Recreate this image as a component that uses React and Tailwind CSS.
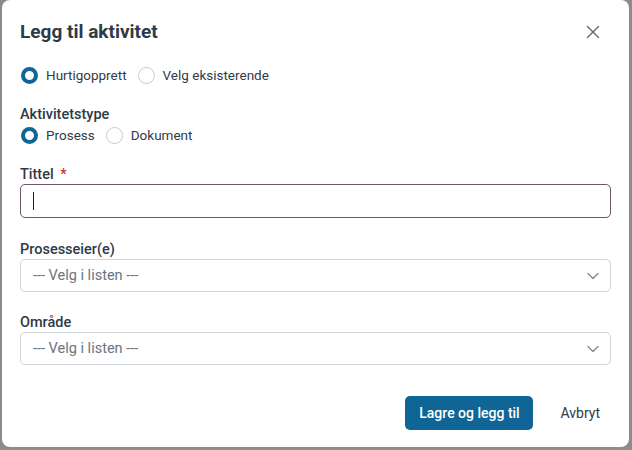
import React from "react";

function Radio({ checked, label }) {
  return (
    <label className="flex items-center gap-[8px] cursor-pointer">
      <span
        className={
          checked
            ? "w-[17px] h-[17px] rounded-full border-[4px] border-[#0f6596] bg-white box-border"
            : "w-[17px] h-[17px] rounded-full border border-[#c4cad3] bg-white box-border"
        }
      />
      <span className="text-[13.5px] leading-[18px] text-[#333b47]">{label}</span>
    </label>
  );
}

function Chevron() {
  return (
    <svg width="14" height="14" viewBox="0 0 14 14" fill="none">
      <path d="M2 4.5 L7 9.5 L12 4.5" stroke="#7f8a99" strokeWidth="1.4" strokeLinecap="round" strokeLinejoin="round" />
    </svg>
  );
}

function Select() {
  return (
    <div className="h-[33px] w-full rounded-[5px] border border-[#cfd5dd] flex items-center justify-between pl-[12px] pr-[10px] bg-white">
      <span className="text-[14.5px] text-[#6b7480]">--- Velg i listen ---</span>
      <Chevron />
    </div>
  );
}

export default function App() {
  return (
    <div
      className="w-[632px] h-[450px] bg-[#8c8c8c] pl-[2px] overflow-hidden"
      style={{ fontFamily: 'Roboto, "Noto Sans", sans-serif' }}
    >
      <div className="w-[627px] h-[447px] bg-white rounded-[8px] px-[18px] pt-[20px] flex flex-col">
        <div className="flex items-center justify-between h-[24px]">
          <h1 className="text-[19px] font-bold text-[#2f3a48] leading-[24px]">Legg til aktivitet</h1>
          <svg width="14" height="14" viewBox="0 0 14 14" className="mr-[11px]">
            <path d="M1.5 1.5 L12.5 12.5 M12.5 1.5 L1.5 12.5" stroke="#5d6877" strokeWidth="1.4" strokeLinecap="round" />
          </svg>
        </div>

        <div className="flex items-center gap-[11px] mt-[22px] h-[18px] pl-[1px]">
          <Radio checked label="Hurtigopprett" />
          <Radio label="Velg eksisterende" />
        </div>

        <div className="mt-[22px] text-[14.5px] font-medium leading-[18px] text-[#2f3a48]">Aktivitetstype</div>
        <div className="flex items-center gap-[11px] mt-[2px] h-[18px] pl-[1px]">
          <Radio checked label="Prosess" />
          <Radio label="Dokument" />
        </div>

        <div className="mt-[22px] text-[14.5px] font-medium leading-[18px] text-[#2f3a48]">
          Tittel <span className="text-[#d32f2f] ml-[3px]">*</span>
        </div>
        <div className="h-[34px] w-full rounded-[5px] border border-[#6e5668] flex items-center pl-[12px]">
          <span className="w-[1px] h-[18px] bg-[#222]" />
        </div>

        <div className="mt-[23px] text-[14.5px] font-medium leading-[18px] text-[#2f3a48]">Prosesseier(e)</div>
        <Select />

        <div className="mt-[22px] text-[14.5px] font-medium leading-[18px] text-[#2f3a48]">Område</div>
        <Select />

        <div className="flex justify-end items-center mt-[31px] gap-[16px]">
          <button className="h-[34px] w-[128px] rounded-[5px] bg-[#0f6596] text-white text-[14px] font-medium">
            Lagre og legg til
          </button>
          <button className="h-[34px] px-[11px] text-[14px] text-[#333b47]">Avbryt</button>
        </div>
      </div>
    </div>
  );
}
